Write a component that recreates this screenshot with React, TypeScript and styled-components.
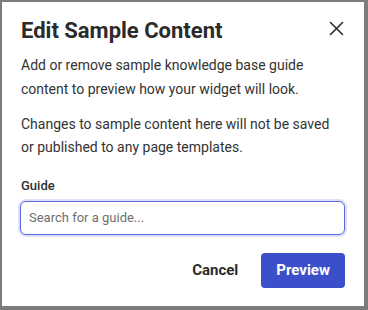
import React from 'react'
import styled, { createGlobalStyle } from 'styled-components'

const font = `Roboto, "Noto Sans", Arial, sans-serif`

const GlobalStyle = createGlobalStyle`
  html, body {
    margin: 0;
    padding: 0;
    background: #7c7c7c;
  }
  body {
    font-family: ${font};
    -webkit-font-smoothing: antialiased;
  }
`

const Frame = styled.div`
  width: 368px;
  height: 310px;
  box-sizing: border-box;
  padding: 2px 4px 4px 2px;
  background: #7c7c7c;
`

const Dialog = styled.div`
  height: 100%;
  box-sizing: border-box;
  background: #fff;
  padding: 15px 19px 0 18px;
  display: flex;
  flex-direction: column;
  color: #2f2f2f;
`

const Header = styled.div`
  display: flex;
  align-items: center;
  justify-content: space-between;
  height: 26px;
`

const Title = styled.h2`
  margin: 0 0 0 1px;
  font-size: 22px;
  font-weight: 700;
  color: #2b2b2b;
`

const CloseButton = styled.button`
  border: 0;
  background: none;
  padding: 0;
  margin: 0 1px 4px 0;
  width: 15px;
  height: 15px;
  display: flex;
  cursor: pointer;
  color: #2b2b2b;
`

const Text = styled.p`
  margin: 0 0 0 1px;
  font-size: 14px;
  line-height: 23.5px;
  color: #333;
`

const Intro = styled(Text)`
  margin-top: 11px;
`

const Note = styled(Text)`
  margin-top: 11.5px;
`

const Label = styled.label`
  display: block;
  margin: 18px 0 0 1px;
  font-size: 13px;
  font-weight: 500;
  color: #2f2f2f;
`

const Input = styled.input`
  margin-top: 8px;
  box-sizing: border-box;
  width: 100%;
  height: 34px;
  padding: 0 8px;
  border: 1px solid #5a69dc;
  border-radius: 6px;
  box-shadow: 0 0 0 2px #dde1fb;
  font-family: ${font};
  font-size: 13px;
  color: #2f2f2f;
  caret-color: #333;
  outline: none;
  &::placeholder {
    color: #6f6f6f;
  }
`

const Actions = styled.div`
  margin-top: 18px;
  display: flex;
  justify-content: flex-end;
  align-items: center;
  gap: 23px;
`

const Button = styled.button<{ $primary?: boolean }>`
  font-family: ${font};
  font-size: 15px;
  font-weight: 700;
  border: 0;
  border-radius: 4px;
  height: 35px;
  padding: 0 ${(p) => (p.$primary ? '15px' : '0')};
  background: ${(p) => (p.$primary ? '#3a4fc9' : 'transparent')};
  color: ${(p) => (p.$primary ? '#fff' : '#2b2b2b')};
  cursor: pointer;
`

const App: React.FC = () => {
  return (
    <>
      <GlobalStyle />
      <Frame>
        <Dialog>
          <Header>
            <Title>Edit Sample Content</Title>
            <CloseButton aria-label="Close">
              <svg width="15" height="15" viewBox="0 0 15 15" fill="none">
                <path
                  d="M1.5 1.5L13.5 13.5M13.5 1.5L1.5 13.5"
                  stroke="currentColor"
                  strokeWidth="1.6"
                  strokeLinecap="round"
                />
              </svg>
            </CloseButton>
          </Header>
          <Intro>
            Add or remove sample knowledge base guide content to preview how
            your widget will look.
          </Intro>
          <Note>
            Changes to sample content here will not be saved or published to
            any page templates.
          </Note>
          <Label htmlFor="guide">Guide</Label>
          <Input id="guide" placeholder="Search for a guide..." autoFocus />
          <Actions>
            <Button>Cancel</Button>
            <Button $primary>Preview</Button>
          </Actions>
        </Dialog>
      </Frame>
    </>
  )
}

export default App
